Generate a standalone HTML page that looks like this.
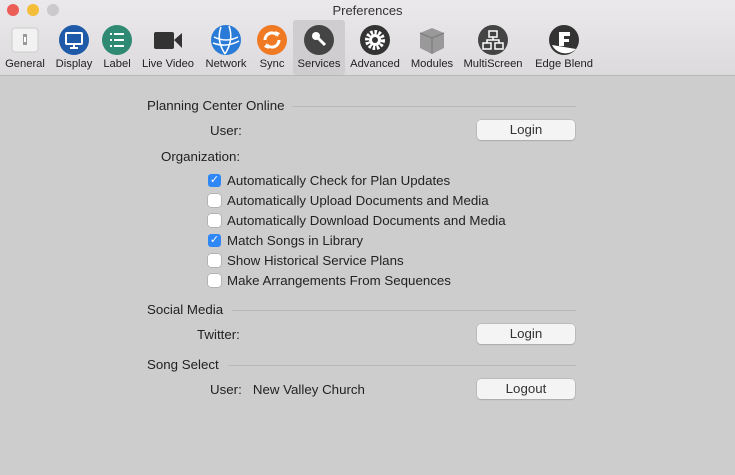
<!DOCTYPE html>
<html><head><style>
*{margin:0;padding:0;box-sizing:border-box}
body{width:735px;height:475px;background:#cdcdcd;font-family:"Liberation Sans",sans-serif;font-size:13.3px;color:#222;position:relative;overflow:hidden}
.tb{position:absolute;left:0;top:0;width:735px;height:76px;background:linear-gradient(#ebe9eb,#dcdadc);border-bottom:1px solid #b8b8b8}
.title{position:absolute;top:3px;width:100%;text-align:center;font-size:13px;color:#333}
.dot{position:absolute;top:4px;width:12px;height:12px;border-radius:50%}
.it{position:absolute;top:20px;height:55px;text-align:center;font-size:11.2px;color:#222}
.it span{position:absolute;bottom:5px;left:-5px;right:-5px;white-space:nowrap}
.ic{position:absolute;top:5px;left:50%;margin-left:-15px;width:30px;height:30px}
.sel{background:#cfcdcf;border-radius:3px}
.a{position:absolute;white-space:nowrap}
.hr{position:absolute;height:1px;background:#b9b9b9}
.btn{position:absolute;left:477px;width:98px;height:20px;background:#f4f4f4;border-radius:4px;box-shadow:0 0 0 .5px #aaa,0 1px 1px #aaa;text-align:center;line-height:20px;color:#333}
.cb{position:absolute;left:208px;width:13px;height:13px;border-radius:3px;background:#fff;box-shadow:0 0 0 .5px #999}
.cb.on{background:#2f86f5;box-shadow:none;color:#fff;font-size:11px;line-height:13px;text-align:center}
</style></head><body>
<div class="tb">
<div class="dot" style="left:7px;background:#ed5d57"></div>
<div class="dot" style="left:27px;background:#f4bd3a"></div>
<div class="dot" style="left:47px;background:#cbc9cb"></div>
<div class="title">Preferences</div>
<div class="it" style="left:3px;width:44px"><svg class="ic" viewBox="0 0 30 30"><rect x="2" y="3" width="26" height="24" rx="3" fill="#f2f2f2" stroke="#ccc"/><rect x="13" y="9" width="4" height="11" fill="#999"/><rect x="14" y="12" width="2" height="5" fill="#fff"/></svg><span>General</span></div>
<div class="it" style="left:52px;width:44px"><svg class="ic" viewBox="0 0 30 30"><circle cx="15" cy="15" r="15" fill="#1e5aa8"/><rect x="7" y="8" width="16" height="11" rx="1" fill="none" stroke="#fff" stroke-width="2"/><path d="M15 19v4M11 23h8" stroke="#fff" stroke-width="2"/></svg><span>Display</span></div>
<div class="it" style="left:98px;width:38px"><svg class="ic" viewBox="0 0 30 30"><circle cx="15" cy="15" r="15" fill="#2f8a74"/><path d="M8 9h2M8 15h2M8 21h2M12 9h10M12 15h10M12 21h10" stroke="#fff" stroke-width="2"/></svg><span>Label</span></div>
<div class="it" style="left:140px;width:56px"><svg class="ic" viewBox="0 0 30 30"><rect x="1" y="7" width="20" height="17" rx="2" fill="#333"/><path d="M21 15l8-7v15z" fill="#333"/></svg><span>Live Video</span></div>
<div class="it" style="left:202px;width:48px"><svg class="ic" viewBox="0 0 30 30"><circle cx="15" cy="15" r="15" fill="#2a7ad8"/><path d="M3 12q12 6 24 0M2 18q13 5 26-2M10 2q-5 13 4 27M18 1q5 14-4 28" stroke="#fff" stroke-width="1.5" fill="none"/></svg><span>Network</span></div>
<div class="it" style="left:254px;width:36px"><svg class="ic" viewBox="0 0 30 30"><circle cx="15" cy="15" r="15" fill="#ef7a23"/><path d="M8 15a7 7 0 0 1 12-5M22 15a7 7 0 0 1-12 5" stroke="#fff" stroke-width="3" fill="none"/><path d="M18 6l5 2-3 4zM12 24l-5-2 3-4z" fill="#fff"/></svg><span>Sync</span></div>
<div class="it sel" style="left:293px;width:52px"><svg class="ic" viewBox="0 0 30 30"><circle cx="15" cy="15" r="15" fill="#444"/><circle cx="12" cy="11" r="4" fill="#fff"/><path d="M14 13l7 7" stroke="#fff" stroke-width="3"/></svg><span>Services</span></div>
<div class="it" style="left:348px;width:54px"><svg class="ic" viewBox="0 0 30 30"><circle cx="15" cy="15" r="15" fill="#333"/><circle cx="15" cy="15" r="8" fill="none" stroke="#fff" stroke-width="4" stroke-dasharray="2.5 1.6"/><circle cx="15" cy="15" r="6" fill="#fff"/><circle cx="15" cy="15" r="3" fill="#333"/></svg><span>Advanced</span></div>
<div class="it" style="left:406px;width:52px"><svg class="ic" viewBox="0 0 30 30"><path d="M15 3l12 5v15l-12 6-12-6V8z" fill="#999"/><path d="M3 8l12 5 12-5M15 13v16" stroke="#777" fill="none"/></svg><span>Modules</span></div>
<div class="it" style="left:461px;width:64px"><svg class="ic" viewBox="0 0 30 30"><circle cx="15" cy="15" r="15" fill="#444"/><rect x="11" y="6" width="8" height="6" fill="none" stroke="#fff" stroke-width="1.5"/><rect x="5" y="18" width="8" height="6" fill="none" stroke="#fff" stroke-width="1.5"/><rect x="17" y="18" width="8" height="6" fill="none" stroke="#fff" stroke-width="1.5"/><path d="M15 12v3M9 18v-3h12v3" stroke="#fff" stroke-width="1.5" fill="none"/></svg><span>MultiScreen</span></div>
<div class="it" style="left:532px;width:64px"><svg class="ic" viewBox="0 0 30 30"><circle cx="15" cy="15" r="15" fill="#333"/><path d="M3 20a15 15 0 0 0 24 4z" fill="#fff"/><path d="M10 7h11v4h-6v3h5v3h-5v4h-5z" fill="#fff"/></svg><span>Edge Blend</span></div>
</div>
<div class="a" style="left:147px;top:98px">Planning Center Online</div>
<div class="hr" style="left:292px;top:106px;width:284px"></div>
<div class="a" style="left:210px;top:123px">User:</div>
<div class="btn" style="top:120px">Login</div>
<div class="a" style="left:161px;top:149px">Organization:</div>
<div class="cb on" style="top:174px">✓</div><div class="a" style="left:227px;top:173px">Automatically Check for Plan Updates</div>
<div class="cb" style="top:194px"></div><div class="a" style="left:227px;top:193px">Automatically Upload Documents and Media</div>
<div class="cb" style="top:214px"></div><div class="a" style="left:227px;top:213px">Automatically Download Documents and Media</div>
<div class="cb on" style="top:234px">✓</div><div class="a" style="left:227px;top:233px">Match Songs in Library</div>
<div class="cb" style="top:254px"></div><div class="a" style="left:227px;top:253px">Show Historical Service Plans</div>
<div class="cb" style="top:274px"></div><div class="a" style="left:227px;top:273px">Make Arrangements From Sequences</div>
<div class="a" style="left:147px;top:302px">Social Media</div>
<div class="hr" style="left:232px;top:310px;width:344px"></div>
<div class="a" style="left:197px;top:327px">Twitter:</div>
<div class="btn" style="top:324px">Login</div>
<div class="a" style="left:147px;top:357px">Song Select</div>
<div class="hr" style="left:228px;top:365px;width:348px"></div>
<div class="a" style="left:210px;top:382px">User:&nbsp;&nbsp; New Valley Church</div>
<div class="btn" style="top:379px">Logout</div>
</body></html>
